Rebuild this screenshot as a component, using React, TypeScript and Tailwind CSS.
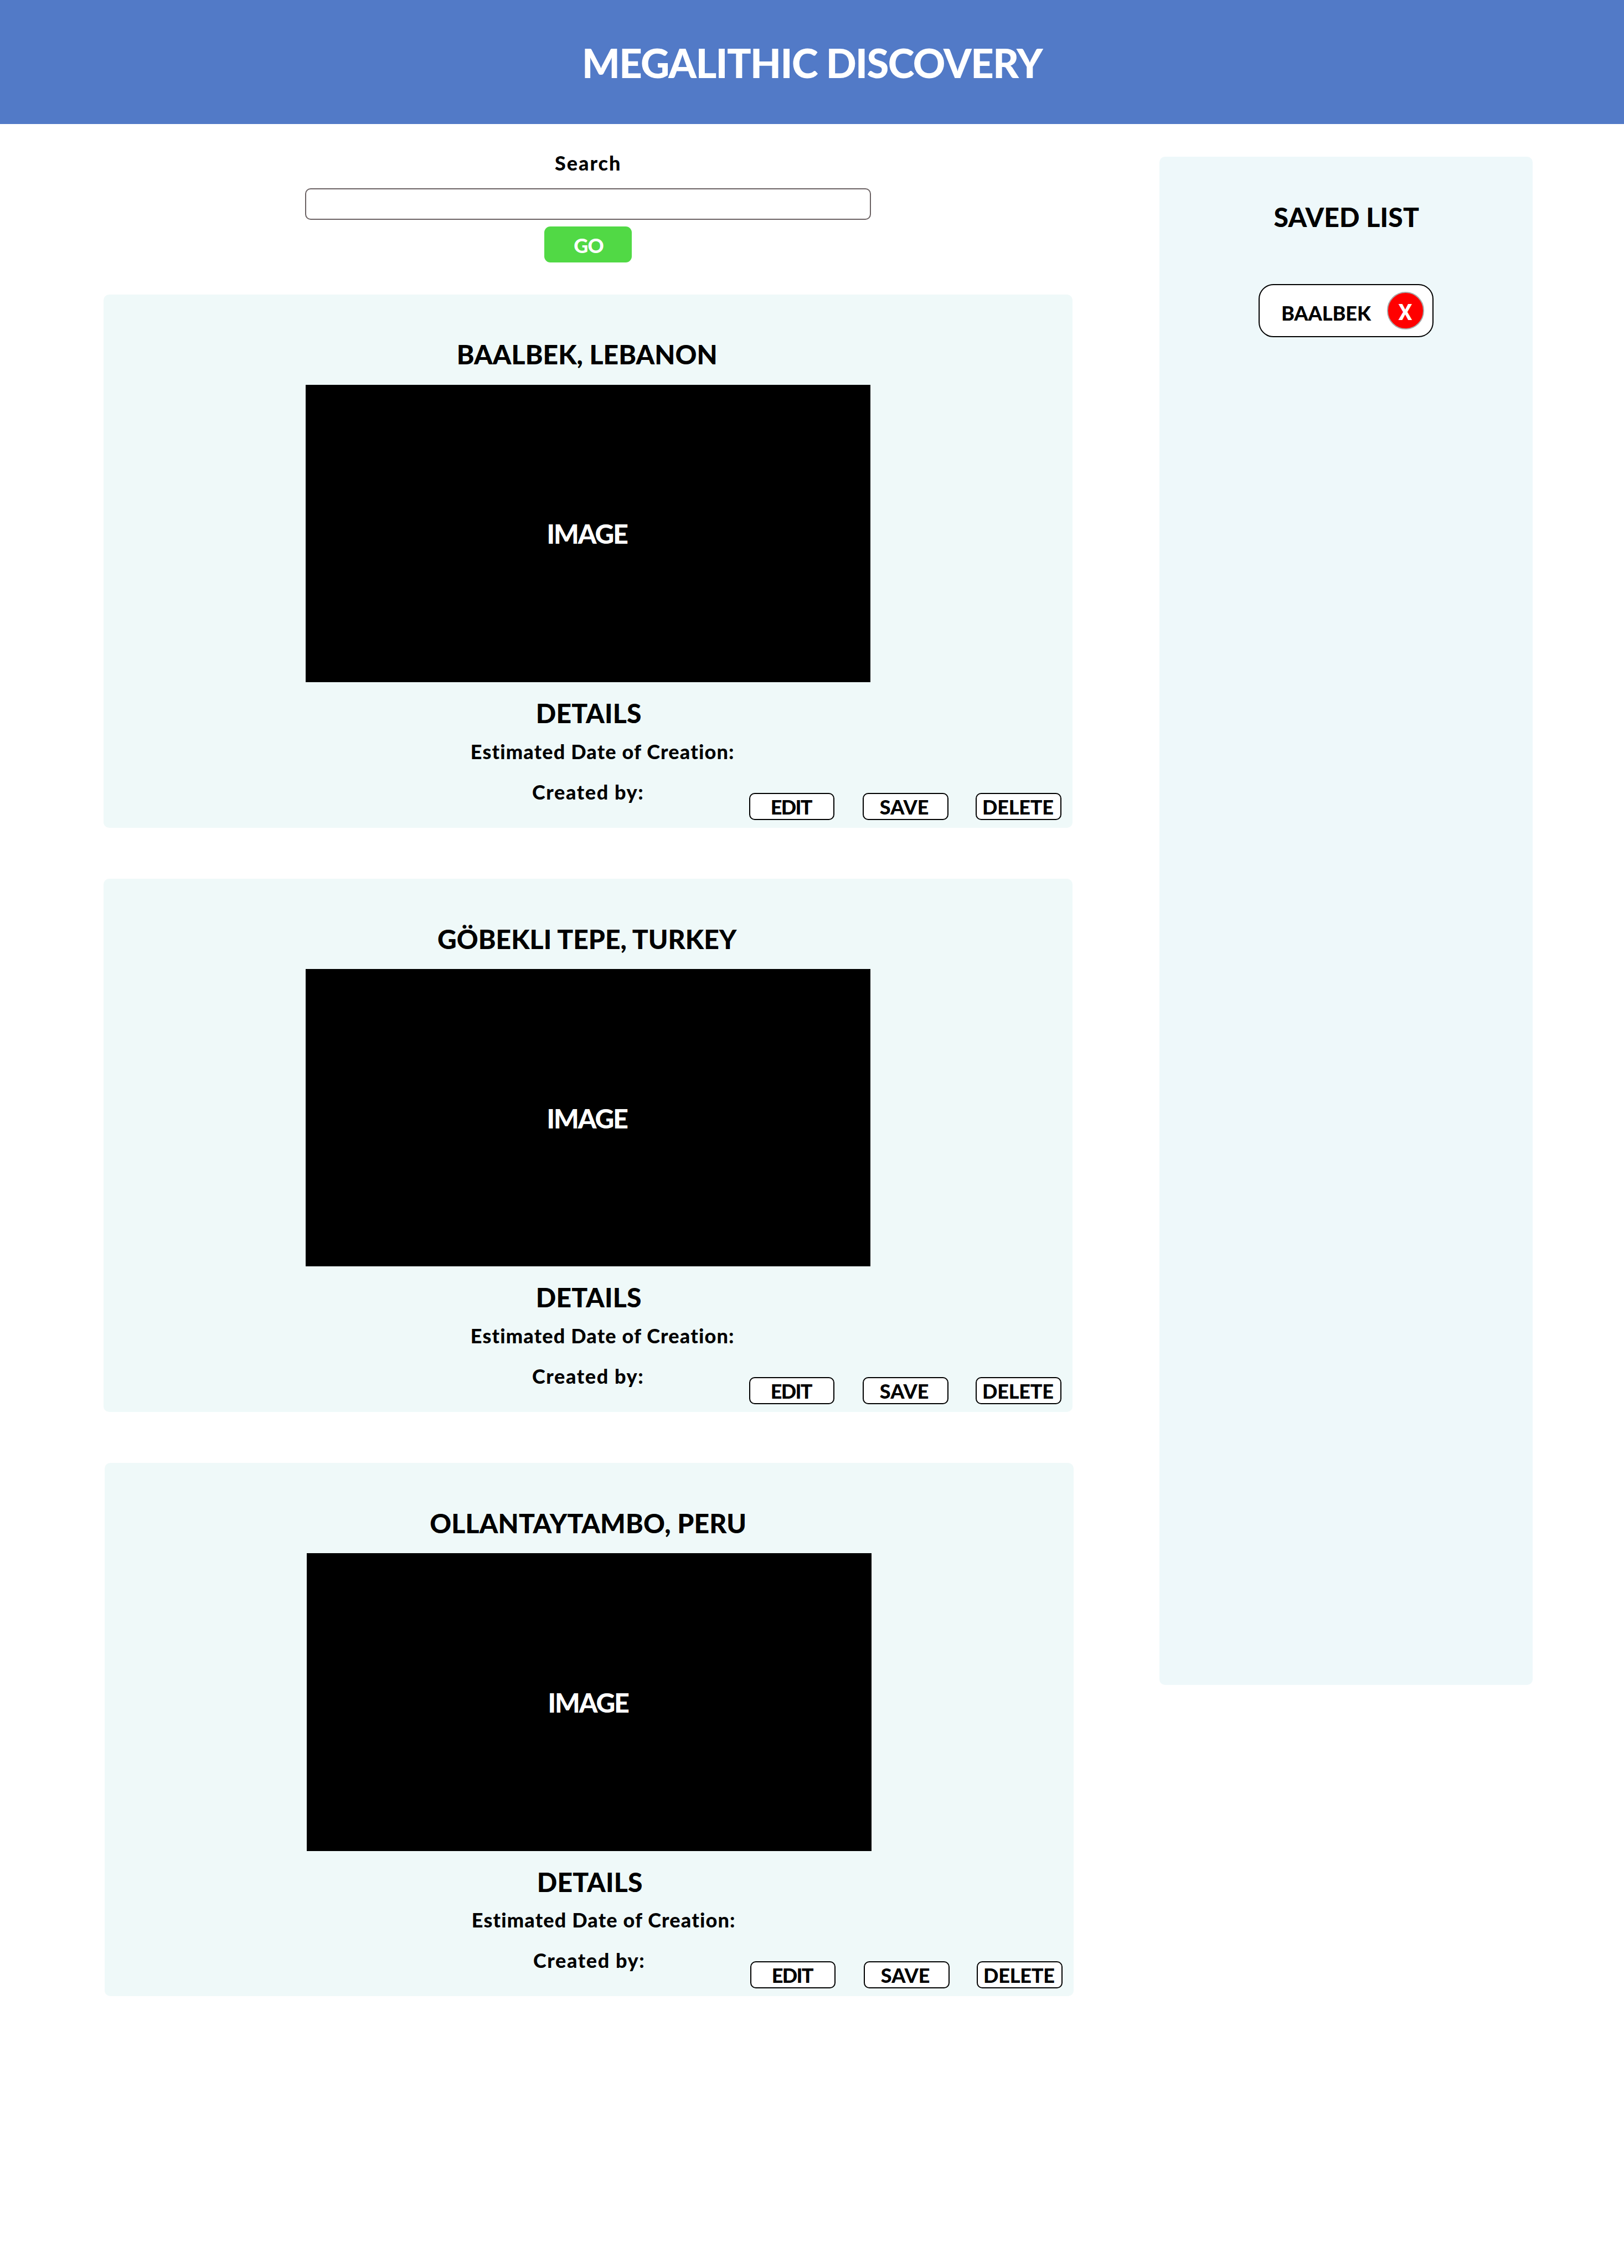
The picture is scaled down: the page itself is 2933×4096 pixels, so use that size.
import clsx from "clsx";

interface Site {
  name: string;
  titleTracking: string;
  className?: string;
}

const sites: Site[] = [
  { name: "BAALBEK, LEBANON", titleTracking: "tracking-[0.0013em]" },
  { name: "GÖBEKLI TEPE, TURKEY", titleTracking: "tracking-[0.0005em]" },
  { name: "OLLANTAYTAMBO, PERU", titleTracking: "tracking-[0.0032em]", className: "ml-0.5" },
];

const actionClass =
  "flex h-[49.2px] w-[154.5px] items-center justify-center rounded-[10px] border-2 border-black bg-white pt-[1px] text-[36px] leading-none font-black";

function SiteCard({ site }: { site: Site }) {
  return (
    <article
      className={clsx(
        "flex h-[963.5px] w-[1750px] shrink-0 flex-col items-center rounded-[10px] bg-[#eff9f9] pt-[78.8px]",
        site.className,
      )}
    >
      <h2 className={clsx("pr-1 text-[48px] leading-[60px] whitespace-nowrap", site.titleTracking)}>{site.name}</h2>
      <div className="mt-[24.3px] flex h-[537.5px] w-[1020.5px] shrink-0 items-center justify-center bg-black pt-[2px] pr-[4px] text-[48px] leading-[60px] tracking-[-0.041em] text-white">
        IMAGE
      </div>
      <h3 className="mt-[26px] pl-[2px] text-[48px] leading-[60px] tracking-[0.004em]">DETAILS</h3>
      <p className="mt-[14.8px] pl-[52px] text-[36px] leading-[48px] tracking-[0.0326em] whitespace-nowrap">
        Estimated Date of Creation:
      </p>
      <div className="mt-[25px] grid h-[74.8px] w-full grid-cols-[1fr_auto_1fr]">
        <p className="col-start-2 text-[36px] leading-[48px] tracking-[0.0445em] whitespace-nowrap">Created by:</p>
        <div className="flex items-end justify-end pr-[20.6px]">
          <button className={clsx(actionClass, "mr-[50.9px] pr-[2px] tracking-[-0.0451em]")}>EDIT</button>
          <button className={clsx(actionClass, "mr-[49.6px] pr-1 tracking-[0.0028em]")}>SAVE</button>
          <button className={clsx(actionClass, "pr-[2px] tracking-[-0.0053em]")}>DELETE</button>
        </div>
      </div>
    </article>
  );
}

function SearchForm() {
  return (
    <div className="flex flex-col items-center">
      <label htmlFor="search" className="text-[36px] leading-[48px] tracking-[0.0556em]">
        Search
      </label>
      <input
        id="search"
        className="mt-[22.5px] h-[57.4px] w-[1022px] rounded-[10px] border-2 border-[#6b6263] bg-white px-4 text-[36px]"
      />
      <button className="mt-[11.8px] flex h-[65.2px] w-[157.4px] items-center justify-center rounded-[11px] bg-[#51d945] pt-[2px] pl-[2px] text-[36px] leading-none font-black tracking-[-0.0189em] text-white">
        GO
      </button>
    </div>
  );
}

function SavedList() {
  return (
    <aside className="mt-[59px] flex h-[2759.8px] w-[673.9px] shrink-0 flex-col items-center rounded-[10px] bg-[#eef8fa] pt-[78.9px]">
      <h2 className="pl-[2px] text-[48px] leading-[60px] tracking-[0.0035em]">SAVED LIST</h2>
      <div className="mt-[91.4px] flex h-[95.8px] w-[315.7px] items-center justify-between rounded-[27px] border-2 border-black bg-white pr-[14.5px] pl-[39px]">
        <span className="pt-[7px] text-[36px] leading-[48px] tracking-[-0.002em]">BAALBEK</span>
        <button className="flex size-[67.5px] items-center justify-center rounded-full border-2 border-[#a9a9a9] bg-[#ff0000] pt-[7px] pr-[1px] font-[Roboto,sans-serif] text-[40px] leading-none font-bold text-white">
          X
        </button>
      </div>
    </aside>
  );
}

export default function App() {
  return (
    <div className="h-[4096px] w-[2933px] overflow-hidden bg-white font-[Lato,sans-serif] font-black text-black">
      <header className="flex h-[224px] items-center justify-center bg-[#527ac7] pt-[3px]">
        <h1 className="text-[72.3px] leading-none tracking-[-0.0212em] text-white">MEGALITHIC DISCOVERY</h1>
      </header>
      <main className="flex items-start gap-[156.7px] pl-[187.2px]">
        <section className="w-[1750px] shrink-0 pt-[45.5px]">
          <SearchForm />
          <div className="mt-[57.2px] flex flex-col gap-[91.7px]">
            {sites.map((site) => (
              <SiteCard key={site.name} site={site} />
            ))}
          </div>
        </section>
        <SavedList />
      </main>
    </div>
  );
}
